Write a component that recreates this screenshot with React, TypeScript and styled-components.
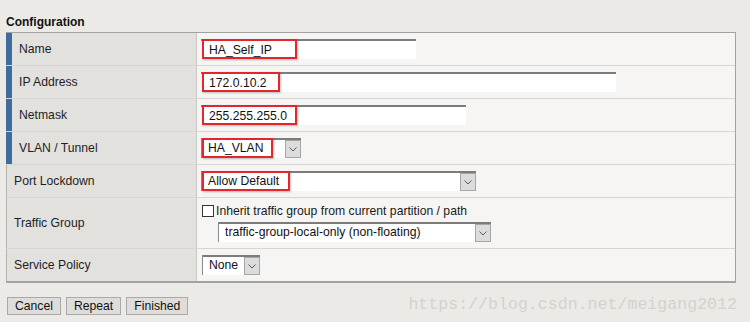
import React from "react";
import styled, { createGlobalStyle } from "styled-components";

const GlobalStyle = createGlobalStyle`
  html, body {
    margin: 0;
    padding: 0;
    background-color: #ebeae6;
  }
  body {
    font-family: "Liberation Sans", Arial, sans-serif;
    font-size: 12px;
    color: #1a1a1a;
  }
`;

const Page = styled.div`
  width: 750px;
  height: 322px;
  overflow: hidden;
  background-color: #ebeae6;
`;

const Title = styled.div`
  font-weight: 700;
  font-size: 12px;
  color: #111111;
  padding: 15px 0 0 6px;
  height: 17px;
`;

const Table = styled.div`
  margin-left: 6px;
  width: 730px;
  border-top: 1px solid #a2a2a2;
  border-right: 1px solid #a2a2a2;
  border-bottom: 2px solid #a2a2a2;
  box-sizing: border-box;
`;

const Row = styled.div<{ $height?: number }>`
  display: flex;
  height: ${(p) => p.$height || 32}px;
  border-bottom: 1px solid #d6d5d1;

  &:last-child {
    border-bottom: none;
  }
`;

const Label = styled.div<{ $required?: boolean }>`
  width: 191px;
  flex-shrink: 0;
  box-sizing: border-box;
  display: flex;
  align-items: center;
  background-color: #e2e1de;
  border-right: 1px solid #c9c8c4;
  border-left: ${(p) => (p.$required ? "6px solid #3c6d9c" : "1px solid #b4b3b0")};
  padding-left: 7px;
  font-size: 12.2px;
  color: #1e1e1e;
`;

const Value = styled.div<{ $column?: boolean }>`
  flex: 1;
  display: flex;
  flex-direction: ${(p) => (p.$column ? "column" : "row")};
  justify-content: ${(p) => (p.$column ? "center" : "flex-start")};
  align-items: ${(p) => (p.$column ? "flex-start" : "center")};
  background-color: #f6f5f3;
  padding-left: 4px;
  gap: 4px;
  font-size: 12.2px;
`;

const Field = styled.div`
  position: relative;
  display: inline-flex;
`;

const Highlight = styled.div<{ $width: number }>`
  position: absolute;
  left: 1px;
  top: 0;
  width: ${(p) => p.$width}px;
  height: 20px;
  box-sizing: border-box;
  border: 2px solid #e3262b;
  box-shadow: 1px 1px 2px rgba(0, 0, 0, 0.25);
  pointer-events: none;
`;

const TextBox = styled.div<{ $width: number }>`
  width: ${(p) => p.$width}px;
  height: 20px;
  box-sizing: border-box;
  background-color: #ffffff;
  border-top: 2px solid #7c7c7c;
  padding: 1px 0 0 8px;
  line-height: 16px;
  color: #111111;
`;

const SelectBox = styled.div<{ $width: number; $indent?: number }>`
  width: ${(p) => p.$width}px;
  height: 20px;
  box-sizing: border-box;
  display: flex;
  align-items: stretch;
  background-color: #ffffff;
  border-top: 2px solid #7c7c7c;
  border-left: 1px solid #8a8a8a;
  margin-left: ${(p) => p.$indent || 0}px;
`;

const SelectText = styled.div`
  flex: 1;
  padding-left: 6px;
  line-height: 17px;
  color: #111111;
  white-space: nowrap;
  overflow: hidden;
`;

const DropButton = styled.div`
  width: 16px;
  box-sizing: border-box;
  background-color: #dcdcdc;
  border: 1px solid #a6a6a6;
  display: flex;
  align-items: center;
  justify-content: center;
`;

const CheckLine = styled.label`
  display: flex;
  align-items: center;
  gap: 2px;
  margin-left: 1px;
  line-height: 14px;
`;

const Check = styled.span`
  width: 12px;
  height: 12px;
  box-sizing: border-box;
  border: 1px solid #333333;
  background-color: #ffffff;
`;

const Footer = styled.div`
  display: flex;
  align-items: center;
  justify-content: space-between;
  padding: 14px 12px 0 7px;
`;

const Buttons = styled.div`
  display: flex;
  gap: 5px;
`;

const Button = styled.button`
  height: 18px;
  padding: 0 7px;
  font-family: "Liberation Sans", Arial, sans-serif;
  font-size: 12.2px;
  line-height: 14px;
  color: #111111;
  background-color: #dedddb;
  border: 1px solid #a9a9a9;
  border-radius: 0;
`;

const Watermark = styled.div`
  font-family: "Liberation Mono", "DejaVu Sans Mono", monospace;
  font-size: 16.6px;
  color: #d3d2ce;
  margin-top: -4px;
  margin-right: 1px;
`;

const Chevron = () => (
  <svg width="8" height="5" viewBox="0 0 8 5">
    <path d="M0.5 0.5 L4 4 L7.5 0.5" fill="none" stroke="#5a5a5a" strokeWidth="1" />
  </svg>
);

const Select = ({ width, text, indent }: { width: number; text: string; indent?: number }) => (
  <SelectBox $width={width} $indent={indent}>
    <SelectText>{text}</SelectText>
    <DropButton>
      <Chevron />
    </DropButton>
  </SelectBox>
);

export default function App() {
  return (
    <Page>
      <GlobalStyle />
      <Title>Configuration</Title>
      <Table>
        <Row>
          <Label $required>Name</Label>
          <Value>
            <Field>
              <TextBox $width={215}>HA_Self_IP</TextBox>
              <Highlight $width={95} />
            </Field>
          </Value>
        </Row>
        <Row>
          <Label $required>IP Address</Label>
          <Value>
            <Field>
              <TextBox $width={415}>172.0.10.2</TextBox>
              <Highlight $width={78} />
            </Field>
          </Value>
        </Row>
        <Row>
          <Label $required>Netmask</Label>
          <Value>
            <Field>
              <TextBox $width={265}>255.255.255.0</TextBox>
              <Highlight $width={95} />
            </Field>
          </Value>
        </Row>
        <Row>
          <Label $required>VLAN / Tunnel</Label>
          <Value>
            <Field>
              <Select width={100} text="HA_VLAN" />
              <Highlight $width={71} />
            </Field>
          </Value>
        </Row>
        <Row>
          <Label>Port Lockdown</Label>
          <Value>
            <Field>
              <Select width={275} text="Allow Default" />
              <Highlight $width={88} />
            </Field>
          </Value>
        </Row>
        <Row $height={50}>
          <Label>Traffic Group</Label>
          <Value $column>
            <CheckLine>
              <Check />
              Inherit traffic group from current partition / path
            </CheckLine>
            <Select width={273} text="traffic-group-local-only (non-floating)" indent={17} />
          </Value>
        </Row>
        <Row>
          <Label>Service Policy</Label>
          <Value>
            <Select width={58} text="None" indent={1} />
          </Value>
        </Row>
      </Table>
      <Footer>
        <Buttons>
          <Button>Cancel</Button>
          <Button>Repeat</Button>
          <Button>Finished</Button>
        </Buttons>
        <Watermark>https://blog.csdn.net/meigang2012</Watermark>
      </Footer>
    </Page>
  );
}
